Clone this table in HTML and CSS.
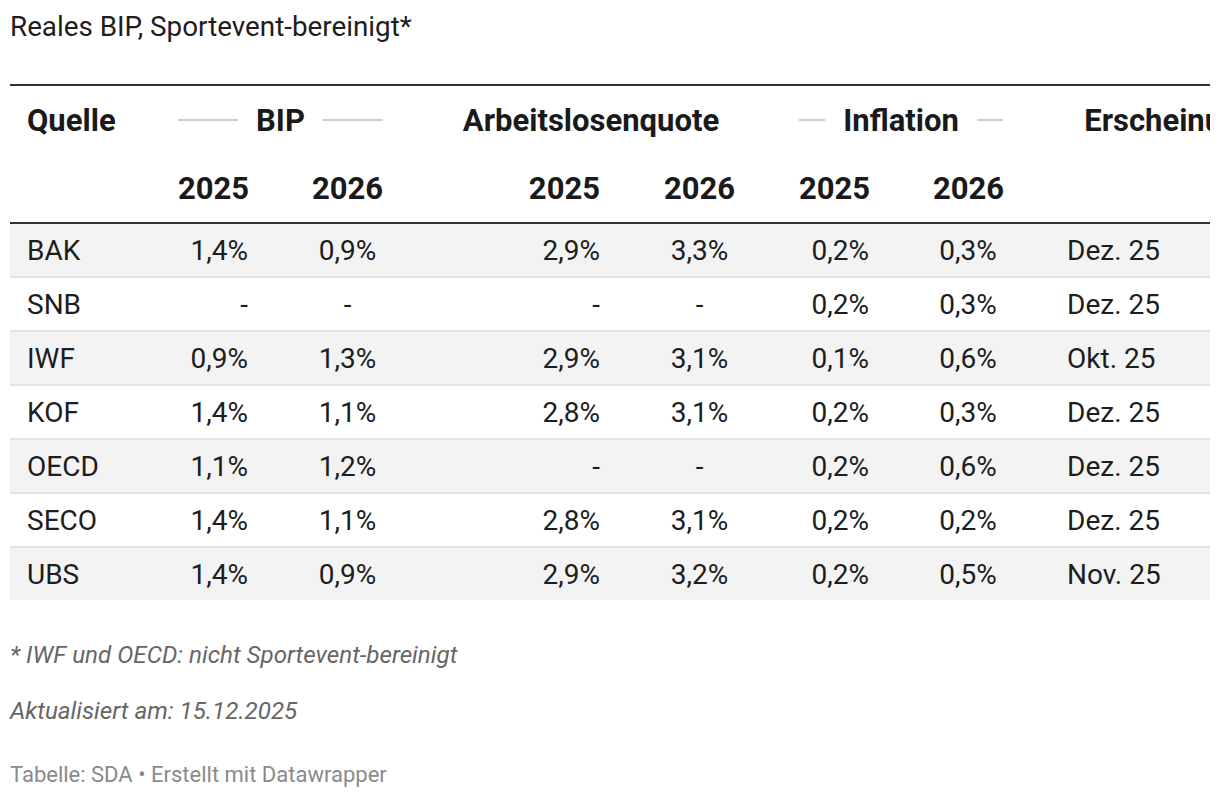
FILE: index.html
```html
<!DOCTYPE html>
<html lang="de">
<head>
<meta charset="utf-8">
<title>Reales BIP, Sportevent-bereinigt*</title>
<link rel="stylesheet" href="styles.css">
</head>
<body>
<div class="chart">
  <h1 class="title">Reales BIP, Sportevent-bereinigt*</h1>
  <div class="table-wrap">
    <table class="dw-table">
      <colgroup>
        <col class="w-src">
        <col class="w-num">
        <col class="w-num2">
        <col class="w-wide">
        <col class="w-num2">
        <col class="w-num">
        <col class="w-num">
        <col class="w-date">
      </colgroup>
      <thead>
        <tr class="row-group">
          <th class="c-src">Quelle</th>
          <th colspan="2" class="c-group"><span class="grp"><span class="grp-line"></span><span class="grp-text">BIP</span><span class="grp-line"></span></span></th>
          <th colspan="2" class="c-group"><span class="grp grp-full"><span class="grp-line"></span><span class="grp-text">Arbeitslosenquote</span><span class="grp-line"></span></span></th>
          <th colspan="2" class="c-group"><span class="grp"><span class="grp-line"></span><span class="grp-text">Inflation</span><span class="grp-line"></span></span></th>
          <th class="c-date-h">Erscheinungsdatum</th>
        </tr>
        <tr class="row-years">
          <th class="c-src"></th>
          <th class="c-right">2025</th>
          <th class="c-center">2026</th>
          <th class="c-right">2025</th>
          <th class="c-center">2026</th>
          <th class="c-right">2025</th>
          <th class="c-center">2026</th>
          <th class="c-date-h"></th>
        </tr>
      </thead>
      <tbody>
        <tr class="striped">
          <td class="c-src">BAK</td><td class="c-right">1,4%</td><td class="c-center">0,9%</td><td class="c-right">2,9%</td><td class="c-center">3,3%</td><td class="c-right">0,2%</td><td class="c-center">0,3%</td><td class="c-date">Dez. 25</td>
        </tr>
        <tr>
          <td class="c-src">SNB</td><td class="c-right">-</td><td class="c-center">-</td><td class="c-right">-</td><td class="c-center">-</td><td class="c-right">0,2%</td><td class="c-center">0,3%</td><td class="c-date">Dez. 25</td>
        </tr>
        <tr class="striped">
          <td class="c-src">IWF</td><td class="c-right">0,9%</td><td class="c-center">1,3%</td><td class="c-right">2,9%</td><td class="c-center">3,1%</td><td class="c-right">0,1%</td><td class="c-center">0,6%</td><td class="c-date">Okt. 25</td>
        </tr>
        <tr>
          <td class="c-src">KOF</td><td class="c-right">1,4%</td><td class="c-center">1,1%</td><td class="c-right">2,8%</td><td class="c-center">3,1%</td><td class="c-right">0,2%</td><td class="c-center">0,3%</td><td class="c-date">Dez. 25</td>
        </tr>
        <tr class="striped">
          <td class="c-src">OECD</td><td class="c-right">1,1%</td><td class="c-center">1,2%</td><td class="c-right">-</td><td class="c-center">-</td><td class="c-right">0,2%</td><td class="c-center">0,6%</td><td class="c-date">Dez. 25</td>
        </tr>
        <tr>
          <td class="c-src">SECO</td><td class="c-right">1,4%</td><td class="c-center">1,1%</td><td class="c-right">2,8%</td><td class="c-center">3,1%</td><td class="c-right">0,2%</td><td class="c-center">0,2%</td><td class="c-date">Dez. 25</td>
        </tr>
        <tr class="striped last">
          <td class="c-src">UBS</td><td class="c-right">1,4%</td><td class="c-center">0,9%</td><td class="c-right">2,9%</td><td class="c-center">3,2%</td><td class="c-right">0,2%</td><td class="c-center">0,5%</td><td class="c-date">Nov. 25</td>
        </tr>
      </tbody>
    </table>
  </div>
  <div class="notes">
    <p class="note">* IWF und OECD: nicht Sportevent-bereinigt</p>
    <p class="note note-second">Aktualisiert am: 15.12.2025</p>
  </div>
  <div class="footer">Tabelle: SDA • Erstellt mit Datawrapper</div>
</div>
</body>
</html>
```

FILE: styles.css
```css
html, body {
  margin: 0;
  padding: 0;
  background: #ffffff;
}

body {
  font-family: Roboto, "Liberation Sans", Arial, sans-serif;
  color: #1d1d1d;
}

.chart {
  padding: 10px 10px 0 10px;
}

.title {
  margin: 0;
  font-size: 27.8px;
  line-height: 34px;
  font-weight: 400;
  color: #1d1d1d;
}

.table-wrap {
  margin-top: 40px;
  width: 1200px;
  overflow: hidden;
}

.dw-table {
  border-collapse: collapse;
  table-layout: fixed;
  width: 1401px;
}

.w-src { width: 136px; }
.w-num { width: 134px; }
.w-num2 { width: 135px; }
.w-wide { width: 217px; }
.w-date { width: 376px; }

.dw-table th,
.dw-table td {
  padding: 0 32px;
  white-space: nowrap;
}

.dw-table th {
  font-weight: 700;
  font-size: 31px;
  color: #1a1a1a;
}

.dw-table td {
  font-size: 28px;
  font-weight: 400;
  color: #1d1d1d;
}

.dw-table .c-src {
  padding-left: 17px;
  text-align: left;
}

.c-right { text-align: right; }
.c-center { text-align: center; }
.c-date { text-align: left; }
.c-date-h { text-align: center; }

.row-group th {
  height: 68px;
  border-top: 2px solid #333333;
}

.row-years th {
  height: 68px;
  border-bottom: 2px solid #333333;
}

.grp {
  display: flex;
  align-items: center;
  justify-content: center;
  gap: 18px;
}

.grp-line {
  flex: 1 1 0;
  min-width: 0;
  height: 2px;
  background: #cccccc;
}

.grp-full .grp-line {
  display: none;
}

.grp-text {
  flex: none;
}

.dw-table tbody td {
  height: 52px;
}

.dw-table tbody tr {
  border-bottom: 2px solid #e3e3e3;
}

.dw-table tbody tr.last {
  border-bottom: none;
}

.dw-table tbody tr.striped {
  background: #f3f3f3;
}

.notes {
  margin-top: 40px;
}

.note {
  margin: 0;
  font-size: 24.2px;
  line-height: 30px;
  font-style: italic;
  color: #666666;
}

.note-second {
  margin-top: 26px;
}

.footer {
  margin-top: 35px;
  font-size: 22px;
  line-height: 28px;
  color: #8a8a8a;
}
```
